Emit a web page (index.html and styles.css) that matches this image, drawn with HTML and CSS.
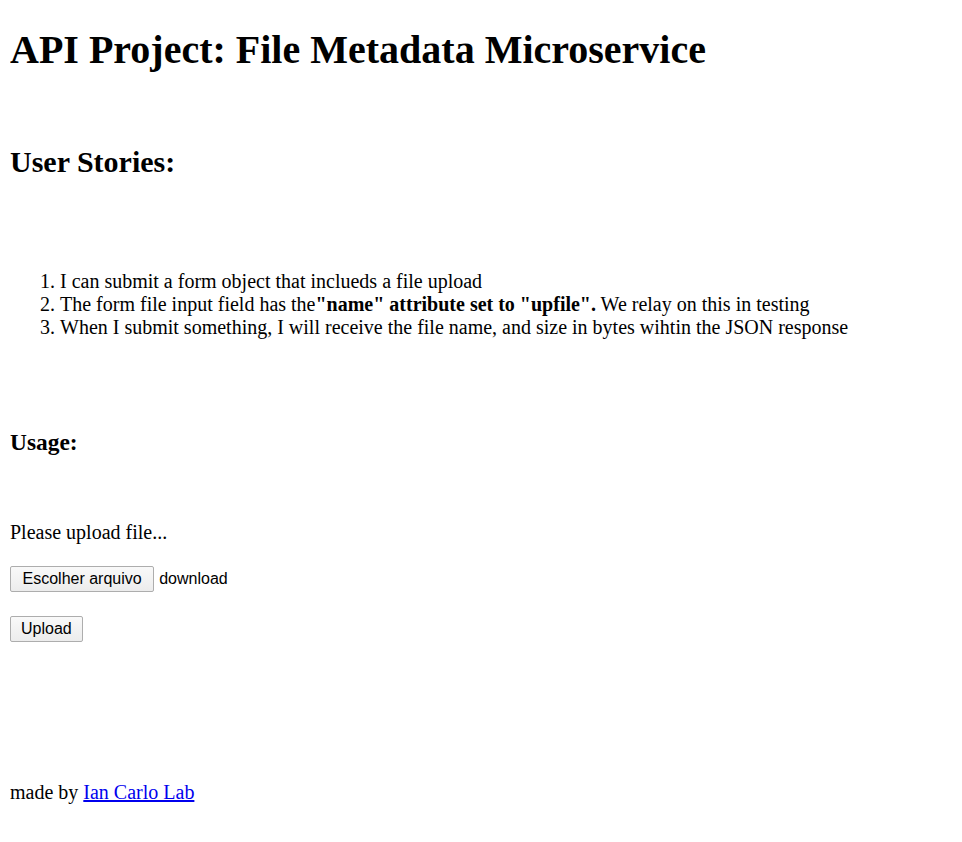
FILE: index.html
```html
<!DOCTYPE html>
<html lang="en">
<head>
<meta charset="utf-8">
<title>File Metadata Microservice</title>
<link rel="stylesheet" href="styles.css">
</head>
<body>
<header class="header">
  <h1 class="title">API Project: File Metadata Microservice</h1>
</header>
<section class="stories">
  <h2 class="stories-title">User Stories:</h2>
  <ol class="story-list">
    <li>I can submit a form object that inclueds a file upload</li>
    <li>The form file input field has the<b>"name" attribute set to "upfile".</b> We relay on this in testing</li>
    <li>When I submit something, I will receive the file name, and size in bytes wihtin the JSON response</li>
  </ol>
</section>
<section class="usage">
  <h3 class="usage-title">Usage:</h3>
  <p class="prompt">Please upload file...</p>
  <form class="upload-form">
    <div class="file-row">
      <button type="button" class="btn btn-file">Escolher arquivo</button>
      <span class="file-name">download</span>
    </div>
    <div class="submit-row">
      <button type="button" class="btn">Upload</button>
    </div>
  </form>
</section>
<footer class="footer">
  <p class="credit">made by <a class="credit-link" href="#">Ian Carlo Lab</a></p>
</footer>
</body>
</html>
```
FILE: styles.css
```css
html {
  font-size: 20px;
}
body {
  margin: 0 10px;
  padding-top: 1px;
  font-family: "Liberation Serif", "Times New Roman", serif;
  font-size: 20px;
  color: #000;
  background: #fff;
}
.title {
  font-size: 40px;
  font-weight: bold;
  margin: 24.5px 0 72px;
}
.stories-title {
  font-size: 30px;
  font-weight: bold;
  margin: 0 0 91px;
}
.story-list {
  margin: 0 0 90px;
  padding-left: 50px;
}
.usage-title {
  font-size: 23.4px;
  font-weight: bold;
  margin: 0 0 65px;
}
.prompt {
  margin: 0 0 22px;
}
.upload-form {
  margin: 0;
}
.file-row {
  display: flex;
  align-items: center;
  gap: 5px;
  margin-bottom: 24px;
}
.submit-row {
  display: flex;
}
.btn {
  font-family: "Liberation Sans", Arial, sans-serif;
  font-size: 16px;
  line-height: 18px;
  height: 26px;
  padding: 3px 10px;
  margin: 0;
  color: #000;
  background: linear-gradient(#f9f9f9, #ececec);
  border: 1px solid #adadad;
  border-radius: 2px;
}
.btn-file {
  padding: 3px 11.5px;
}
.file-name {
  font-family: "Liberation Sans", Arial, sans-serif;
  font-size: 16px;
}
.footer {
  margin-top: 139px;
}
.credit {
  margin: 0;
}
.credit-link {
  color: #0000ee;
}
```
